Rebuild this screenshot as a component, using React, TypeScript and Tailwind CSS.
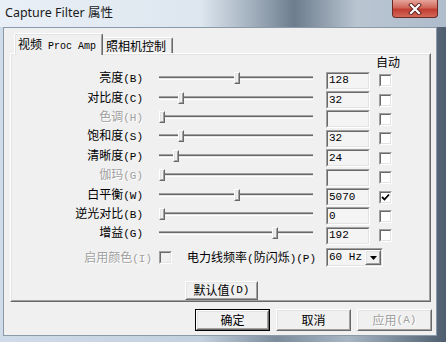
import React from 'react';

const cjk = "font-['Noto_Sans_CJK_SC',sans-serif]";
const mono = "font-['Liberation_Mono','Noto_Sans_CJK_SC',monospace] text-[11px]";

type Row = { zh: string; k: string; v: string; pos: number; dis?: boolean; chk?: boolean };

const rows: Row[] = [
  { zh: '亮度', k: 'B', v: '128', pos: 78 },
  { zh: '对比度', k: 'C', v: '32', pos: 22 },
  { zh: '色调', k: 'H', v: '', pos: 3, dis: true },
  { zh: '饱和度', k: 'S', v: '32', pos: 22 },
  { zh: '清晰度', k: 'P', v: '24', pos: 17 },
  { zh: '伽玛', k: 'G', v: '', pos: 3, dis: true },
  { zh: '白平衡', k: 'W', v: '5070', pos: 78, chk: true },
  { zh: '逆光对比', k: 'B', v: '0', pos: 3 },
  { zh: '增益', k: 'G', v: '192', pos: 116 },
];

// classic sunken 3d edge (edit boxes, checkboxes)
const Sunken: React.FC<{ className?: string; inner?: string; children?: React.ReactNode }> = ({ className = '', inner = '', children }) => (
  <div className={`border border-t-[#a0a0a0] border-l-[#a0a0a0] border-b-white border-r-white ${className}`}>
    <div className={`h-full w-full border border-t-[#696969] border-l-[#696969] border-b-[#e3e3e3] border-r-[#e3e3e3] ${inner}`}>{children}</div>
  </div>
);

// classic raised 3d edge (buttons, thumbs)
const Raised: React.FC<{ className?: string; inner?: string; children?: React.ReactNode }> = ({ className = '', inner = '', children }) => (
  <div className={`border border-t-white border-l-white border-b-[#696969] border-r-[#696969] bg-[#f0f0f0] ${className}`}>
    <div className={`h-full w-full border border-t-[#e3e3e3] border-l-[#e3e3e3] border-b-[#a0a0a0] border-r-[#a0a0a0] ${inner}`}>{children}</div>
  </div>
);

const Label: React.FC<{ zh: string; k: string; dis?: boolean }> = ({ zh, k, dis }) => (
  <span className={dis ? 'text-[#a0a0a0] [text-shadow:1px_1px_0_#fff]' : 'text-black'}>
    {zh}
    <span className={mono}>({k})</span>
  </span>
);

const Thumb: React.FC<{ pos: number }> = ({ pos }) => (
  <div className="absolute top-0 w-[6px] h-[12px]" style={{ left: pos - 3 }}>
    <Raised className="w-full h-full" />
  </div>
);

const Check: React.FC<{ on?: boolean; dis?: boolean }> = ({ on, dis }) => (
  <Sunken className="w-[13px] h-[13px]" inner={`${dis ? 'bg-[#f0f0f0]' : 'bg-white'} flex items-center justify-center`}>
    {on && (
      <svg width="9" height="9" viewBox="0 0 9 9">
        <path d="M1 4 L3.5 6.5 L8 1.5" stroke="#000" strokeWidth="1.8" fill="none" />
      </svg>
    )}
  </Sunken>
);

export default function App() {
  return (
    <div className={`w-[446px] h-[342px] flex flex-col overflow-hidden bg-[linear-gradient(to_right,#cfdbe8_0%,#c3d0dd_45%,#7c8c9c_62%,#a8b6c4_78%,#4e5e6e_100%)] text-[12px] ${cjk}`}>
      {/* title bar */}
      <div className="h-[27px] flex items-start justify-between bg-[linear-gradient(to_right,#e9eff6_0%,#dde6ef_45%,#9aa8b6_58%,#6d7d8d_66%,#b9c5d1_80%,#aebccb_100%)]">
        <div className="pl-[5px] pt-[5px] text-[12.5px] leading-[16px] text-[#1b1b1b] font-['Noto_Sans','Noto_Sans_CJK_SC',sans-serif]">
          Capture Filter 属性
        </div>
        <div className="mr-[8px] w-[46px] h-[18px] rounded-b-[4px] border border-t-0 border-[#6b2a26] bg-[linear-gradient(#e6a49a_0%,#d0675b_45%,#c13d30_55%,#d26a5a_100%)] flex items-center justify-center">
          <svg width="14" height="12" viewBox="0 0 14 12">
            <path d="M3 2 L11 10 M11 2 L3 10" stroke="#5a2220" strokeWidth="4" strokeLinecap="square" />
            <path d="M3 2 L11 10 M11 2 L3 10" stroke="#fff" strokeWidth="2.2" strokeLinecap="square" />
          </svg>
        </div>
      </div>

      {/* client area */}
      <div className="ml-[3px] mr-[9px] h-[309px] bg-[#f0f0f0] border border-[#8b9aa9] pl-[6px] pr-[5px] pt-[5px] flex flex-col">
        {/* tabs */}
        <div className="flex items-end ml-[4px] h-[20px]">
          <div className="relative z-10 -mb-[2px] h-[22px] w-[89px] bg-[#f0f0f0] border-l border-t border-r border-l-white border-t-white border-r-[#696969] rounded-t-[2px]">
            <div className="h-full whitespace-nowrap border-l border-t border-r border-l-[#e3e3e3] border-t-[#e3e3e3] border-r-[#a0a0a0] pl-[2px] pt-[2px] leading-[14px]">
              视频<span className="font-['Liberation_Mono',monospace] text-[10px]"> Proc Amp</span>
            </div>
          </div>
          <div className="h-[16px] w-[70px] bg-[#f0f0f0] border-t border-r border-t-white border-r-[#696969] rounded-t-[2px]">
            <div className="h-full whitespace-nowrap border-t border-r border-t-[#e3e3e3] border-r-[#a0a0a0] pl-[3px] leading-[14px]">照相机控制</div>
          </div>
        </div>

        {/* panel */}
        <div className="h-[249px] border border-t-white border-l-white border-b-[#696969] border-r-[#696969]">
          <div className="h-full border border-t-[#e3e3e3] border-l-[#e3e3e3] border-b-[#a0a0a0] border-r-[#a0a0a0] flex flex-col">
            <div className="h-[16px] pl-[364px] leading-[14px]">自动</div>
            {rows.map((r, i) => (
              <div key={i} className="h-[19.4px] flex items-center shrink-0">
                <div className="w-[131px] text-right leading-[14px] mb-[5px] whitespace-nowrap">
                  <Label zh={r.zh} k={r.k} dis={r.dis} />
                </div>
                <div className="ml-[16px] mb-[5px]">
                  <div className="relative w-[154px] h-[12px] flex items-center">
                    <div className="w-full h-[4px] bg-[linear-gradient(#a0a0a0_0_1px,#696969_1px_2px,#e3e3e3_2px_3px,#fff_3px_4px)]" />
                    <Thumb pos={r.pos} />
                  </div>
                </div>
                <Sunken className="ml-[13px] w-[44px] h-[18px]" inner="bg-[#f4f4f4] flex items-center pl-[1px]">
                  <span className={`${mono} leading-none`}>{r.v}</span>
                </Sunken>
                <div className="ml-[9px]">
                  <Check on={r.chk} />
                </div>
              </div>
            ))}

            {/* power line row */}
            <div className="mt-[2px] h-[20px] flex items-center">
              <div className="w-[140px] text-right leading-[14px] whitespace-nowrap">
                <Label zh="启用颜色" k="I" dis />
              </div>
              <div className="ml-[7px]">
                <Check dis />
              </div>
              <div className="ml-[15px] w-[139px] leading-[14px] whitespace-nowrap">
                电力线频率<span className={mono}>(</span>防闪烁<span className={mono}>)(P)</span>
              </div>
              <Sunken className="w-[57px] h-[19px]" inner="bg-[#f4f4f4] flex items-center justify-between">
                <span className={`${mono} pl-[1px] leading-none`}>60 Hz</span>
                <Raised className="w-[16px] h-full" inner="flex items-center justify-center">
                  <svg width="7" height="4" viewBox="0 0 7 4">
                    <path d="M0 0 H7 L3.5 4 Z" fill="#000" />
                  </svg>
                </Raised>
              </Sunken>
            </div>

            <div className="mt-[13px] ml-[173px]">
              <Raised className="w-[73px] h-[19px]" inner="flex items-center justify-center leading-[14px] whitespace-nowrap">
                默认值<span className={mono}>(D)</span>
              </Raised>
            </div>
          </div>
        </div>

        {/* dialog buttons */}
        <div className="mt-[7px] flex justify-end gap-[6px] -mr-[1px]">
          <div className="w-[75px] h-[22px] border border-black">
            <Raised className="w-full h-full" inner="flex items-center justify-center leading-[14px]">确定</Raised>
          </div>
          <Raised className="w-[75px] h-[22px]" inner="flex items-center justify-center leading-[14px]">取消</Raised>
          <Raised className="w-[75px] h-[22px]" inner="flex items-center justify-center leading-[14px] whitespace-nowrap text-[#a0a0a0] [text-shadow:1px_1px_0_#fff]">
            应用<span className={mono}>(A)</span>
          </Raised>
        </div>
      </div>
    </div>
  );
}
